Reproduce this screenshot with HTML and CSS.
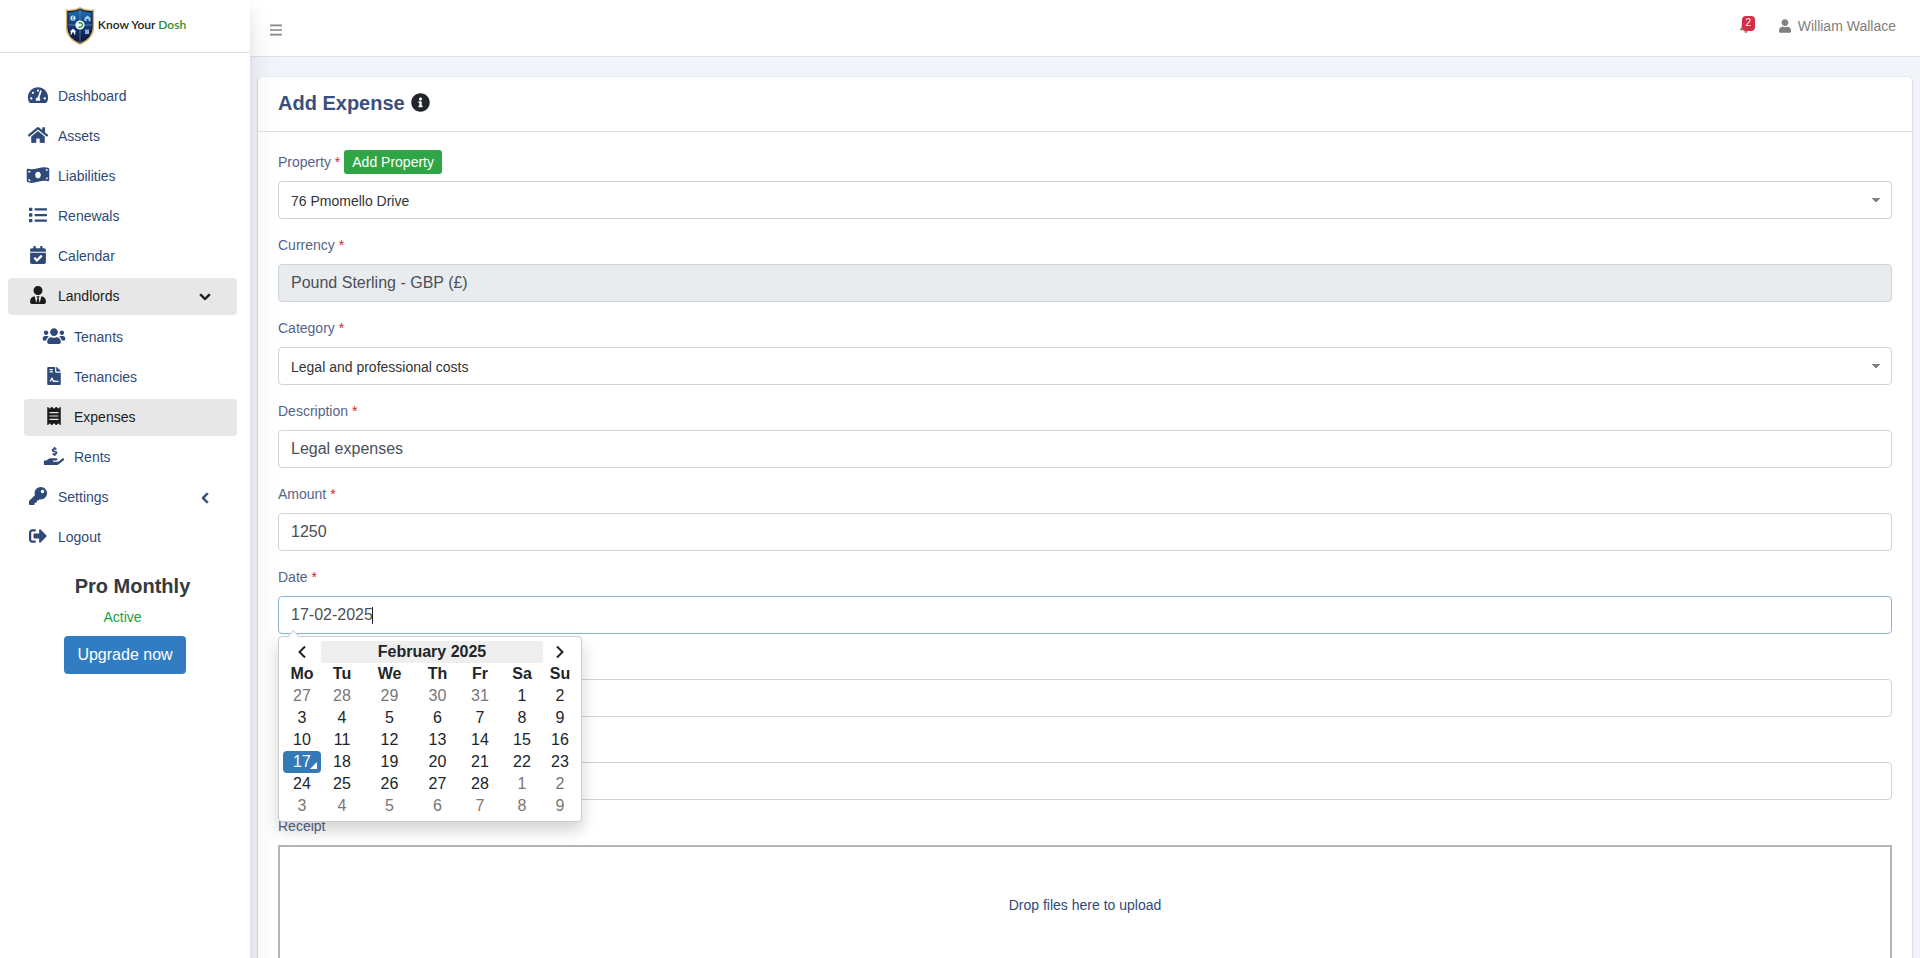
FILE: index.html
```html
<!DOCTYPE html>
<html lang="en">
<head>
  <meta charset="utf-8">
  <meta name="viewport" content="width=device-width, initial-scale=1">
  <title>Add Expense | Know Your Dosh</title>
  <link rel="stylesheet" href="styles.css">
</head>
<body>
  <div class="wrapper">
    <!-- Sidebar -->
    <aside class="sidebar">
      <a href="#" class="brand">
        <svg class="brand-logo" viewBox="0 0 30 38">
          <defs>
            <linearGradient id="shield" x1="0" y1="0" x2="0" y2="1">
              <stop offset="0" stop-color="#1e6fae"/>
              <stop offset=".5" stop-color="#143a7c"/>
              <stop offset="1" stop-color="#0c1638"/>
            </linearGradient>
          </defs>
          <path d="M15 .8C11 3 6 3.600 1.600 3.200V20c0 8 6 14 13.400 17.200C22.400 34 28.400 28 28.400 20V3.200C24 3.600 19 3 15 .8z" fill="#111d3c" stroke="#d9b069" stroke-width="1.400"/>
          <path d="M15 3C11.500 4.800 7.500 5.500 3.500 5.300V20c0 6.500 5 11.800 11.500 14.800C21.500 31.800 26.500 26.500 26.500 20V5.300C22.500 5.500 18.500 4.800 15 3z" fill="url(#shield)"/>
          <path d="M15 1v36M3 18h24" stroke="#5d86b5" stroke-width=".8"/>
          <circle cx="8" cy="11" r="2.600" fill="#d9ecfa"/>
          <path d="M9 9.800H7.400v2.400H9" stroke="#2a6caa" fill="none" stroke-width=".8"/>
          <path d="M19.500 11l3-2.500 3 2.500v3h-2v-2h-2v2h-2z" fill="#9fc9ea"/>
          <path d="M4.800 24.500l3.200-2.800 3.200 2.800h-.9v3H9v-2H7v2H5.700v-3z" fill="#fff"/>
          <path d="M20 22.500h4v4.500h-4z" fill="#8fa8d4"/>
          <circle cx="15" cy="18" r="4.600" fill="#f2f8fb"/>
          <path d="M13.500 15.800c3-.4 4.500 1 4 2.400s-2 2.200-4 2" stroke="#2f9a3c" stroke-width="1.400" fill="none"/>
        </svg>
        <span class="brand-text">Know Your <span>Dosh</span></span>
      </a>

      <nav class="menu">
        <a href="#" class="menu-item">
          <svg class="icon" viewBox="0 0 576 512"><path d="M288 32C128.940 32 0 160.940 0 320c0 52.800 14.250 102.260 39.060 144.800 5.610 9.620 16.300 15.200 27.440 15.200h443c11.140 0 21.830-5.580 27.440-15.200C561.750 422.260 576 372.800 576 320c0-159.060-128.940-288-288-288zm0 64c14.710 0 26.580 10.130 30.320 23.650-1.110 2.260-2.640 4.230-3.450 6.670l-9.220 27.670c-5.130 3.490-10.970 6.010-17.640 6.010-17.670 0-32-14.330-32-32S270.330 96 288 96zM96 384c-17.670 0-32-14.330-32-32s14.330-32 32-32 32 14.330 32 32-14.330 32-32 32zm48-160c-17.670 0-32-14.330-32-32s14.330-32 32-32 32 14.330 32 32-14.330 32-32 32zm246.770-72.410l-61.330 184C343.130 347.330 352 364.540 352 384c0 11.720-3.380 22.550-8.880 32H232.880c-5.500-9.450-8.880-20.280-8.880-32 0-33.940 26.500-61.430 59.900-63.590l61.340-184.010c4.170-12.560 17.730-19.450 30.360-15.170 12.570 4.190 19.350 17.790 15.170 30.360zM480 384c-17.670 0-32-14.330-32-32s14.330-32 32-32 32 14.330 32 32-14.330 32-32 32z"/></svg>
          <span>Dashboard</span>
        </a>
        <a href="#" class="menu-item">
          <svg class="icon" viewBox="0 0 576 512"><path d="M280.370 148.260L96 300.110V464a16 16 0 0 0 16 16l112.060-.29a16 16 0 0 0 15.920-16V368a16 16 0 0 1 16-16h64a16 16 0 0 1 16 16v95.640a16 16 0 0 0 16 16.050L464 480a16 16 0 0 0 16-16V300L295.670 148.260a12.190 12.190 0 0 0-15.300 0zM571.600 251.470L488 182.560V44.050a12 12 0 0 0-12-12h-56a12 12 0 0 0-12 12v72.610L318.470 43a48 48 0 0 0-61 0L4.340 251.470a12 12 0 0 0-1.600 16.900l25.500 31A12 12 0 0 0 45.150 301l235.220-193.740a12.190 12.190 0 0 1 15.300 0L530.900 301a12 12 0 0 0 16.900-1.600l25.500-31a12 12 0 0 0-1.700-16.930z"/></svg>
          <span>Assets</span>
        </a>
        <a href="#" class="menu-item">
          <svg class="icon" viewBox="0 0 640 512"><path d="M621.160 54.460C582.370 38.190 543.550 32 504.750 32c-123.170-.01-246.330 62.340-369.500 62.340-30.890 0-61.760-3.920-92.650-13.720-3.470-1.100-6.950-1.620-10.350-1.620C15.040 79 0 92.320 0 110.810v317.260c0 12.630 7.230 24.600 18.840 29.460C57.630 473.810 96.450 480 135.250 480c123.170 0 246.340-62.350 369.510-62.350 30.890 0 61.760 3.920 92.650 13.720 3.470 1.100 6.950 1.620 10.350 1.620 17.210 0 32.250-13.320 32.250-31.810V83.930c-.01-12.640-7.240-24.600-18.850-29.470zM48 132.220c20.120 5.040 41.120 7.570 62.720 8.930C104.840 170.540 79 192.690 48 192.690v-60.470zm0 285v-47.780c34.370 0 62.180 27.270 63.710 61.400-22.530-1.810-43.590-6.310-63.710-13.620zM320 352c-44.190 0-80-42.990-80-96 0-53.020 35.820-96 80-96s80 42.980 80 96c0 53.030-35.830 96-80 96zm272 27.780c-17.520-4.390-35.710-6.850-54.320-8.440 5.870-26.080 27.500-45.880 54.320-49.280v57.720zm0-236.110c-30.890-3.910-54.860-29.700-55.810-61.550 19.540 2.170 38.090 6.230 55.810 12.660v48.890z"/></svg>
          <span>Liabilities</span>
        </a>
        <a href="#" class="menu-item">
          <svg class="icon" viewBox="0 0 512 512"><path d="M80 368H16a16 16 0 0 0-16 16v64a16 16 0 0 0 16 16h64a16 16 0 0 0 16-16v-64a16 16 0 0 0-16-16zm0-320H16A16 16 0 0 0 0 64v64a16 16 0 0 0 16 16h64a16 16 0 0 0 16-16V64a16 16 0 0 0-16-16zm0 160H16a16 16 0 0 0-16 16v64a16 16 0 0 0 16 16h64a16 16 0 0 0 16-16v-64a16 16 0 0 0-16-16zm416 176H176a16 16 0 0 0-16 16v32a16 16 0 0 0 16 16h320a16 16 0 0 0 16-16v-32a16 16 0 0 0-16-16zm0-320H176a16 16 0 0 0-16 16v32a16 16 0 0 0 16 16h320a16 16 0 0 0 16-16V80a16 16 0 0 0-16-16zm0 160H176a16 16 0 0 0-16 16v32a16 16 0 0 0 16 16h320a16 16 0 0 0 16-16v-32a16 16 0 0 0-16-16z"/></svg>
          <span>Renewals</span>
        </a>
        <a href="#" class="menu-item">
          <svg class="icon" viewBox="0 0 448 512"><path d="M436 160H12c-6.627 0-12-5.373-12-12v-36c0-26.510 21.490-48 48-48h48V12c0-6.627 5.373-12 12-12h40c6.627 0 12 5.373 12 12v52h128V12c0-6.627 5.373-12 12-12h40c6.627 0 12 5.373 12 12v52h48c26.510 0 48 21.490 48 48v36c0 6.627-5.373 12-12 12zM12 192h424c6.627 0 12 5.373 12 12v260c0 26.510-21.490 48-48 48H48c-26.510 0-48-21.490-48-48V204c0-6.627 5.373-12 12-12zm333.296 95.947l-28.169-28.398c-4.667-4.705-12.265-4.736-16.970-.068L194.120 364.665l-45.980-46.352c-4.667-4.705-12.266-4.736-16.971-.068l-28.397 28.170c-4.705 4.667-4.736 12.265-.068 16.970l82.601 83.269c4.667 4.705 12.265 4.736 16.970.068l142.953-141.805c4.705-4.667 4.736-12.265.068-16.970z"/></svg>
          <span>Calendar</span>
        </a>
        <a href="#" class="menu-item active">
          <svg class="icon" viewBox="0 0 448 512"><path d="M224 256c70.700 0 128-57.300 128-128S294.700 0 224 0 96 57.300 96 128s57.300 128 128 128zm95.800 32.600L272 480l-32-136 32-56h-96l32 56-32 136-47.800-191.400C56.900 292 0 350.300 0 422.400V464c0 26.500 21.500 48 48 48h352c26.500 0 48-21.500 48-48v-41.600c0-72.100-56.900-130.400-128.200-133.800z"/></svg>
          <span>Landlords</span>
          <svg class="arrow" viewBox="0 0 448 512"><path d="M207 381.500L12.700 187.100c-9.400-9.400-9.400-24.600 0-33.900l22.700-22.700c9.400-9.400 24.500-9.400 33.900 0L224 284.500l154.700-154c9.400-9.300 24.500-9.300 33.900 0l22.700 22.700c9.400 9.400 9.400 24.600 0 33.900L241 381.500c-9.400 9.400-24.600 9.400-34 0z"/></svg>
        </a>
        <div class="submenu">
          <a href="#" class="menu-item">
            <svg class="icon" viewBox="0 0 640 512"><path d="M96 224c35.300 0 64-28.700 64-64s-28.700-64-64-64-64 28.700-64 64 28.700 64 64 64zm448 0c35.300 0 64-28.700 64-64s-28.700-64-64-64-64 28.700-64 64 28.700 64 64 64zm32 32h-64c-17.600 0-33.500 7.100-45.100 18.600 40.300 22.100 68.900 62 75.100 109.400h66c17.700 0 32-14.300 32-32v-32c0-35.300-28.700-64-64-64zm-256 0c61.900 0 112-50.100 112-112S381.900 32 320 32 208 82.100 208 144s50.100 112 112 112zm76.800 32h-8.300c-20.800 10-43.900 16-68.500 16s-47.600-6-68.500-16h-8.300C179.600 288 128 339.600 128 403.200V432c0 26.500 21.500 48 48 48h288c26.500 0 48-21.500 48-48v-28.800c0-63.600-51.600-115.200-115.200-115.200zm-223.700-13.400C161.500 263.100 145.600 256 128 256H64c-35.300 0-64 28.700-64 64v32c0 17.700 14.300 32 32 32h65.900c6.300-47.400 34.900-87.300 75.200-109.400z"/></svg>
            <span>Tenants</span>
          </a>
          <a href="#" class="menu-item">
            <svg class="icon" viewBox="0 0 384 512"><path fill-rule="evenodd" d="M224 136V0H24C10.700 0 0 10.700 0 24v464c0 13.300 10.700 24 24 24h336c13.300 0 24-10.700 24-24V160H248c-13.200 0-24-10.800-24-24zM377 105L279.100 7c-4.500-4.500-10.600-7-17-7H256v128h128v-6.100c0-6.300-2.500-12.400-7-16.900zM64 60h96v32H64zM64 124h96v32H64zM64 414l50-100c8-16 30-16 38 0l34 70c12-14 36-16 50 8h84v36h-92c-14 0-18-6-24-18-8 20-34 20-44 0l-28-54-24 58z"/></svg>
            <span>Tenancies</span>
          </a>
          <a href="#" class="menu-item active">
            <svg class="icon" viewBox="0 0 384 512"><path d="M358.400 3.200L320 48 265.600 3.200a15.900 15.900 0 0 0-19.200 0L192 48 137.600 3.200a15.900 15.900 0 0 0-19.200 0L64 48 25.600 3.200C15-4.700 0 2.800 0 16v480c0 13.200 15 20.700 25.600 12.800L64 464l54.400 44.800a15.900 15.900 0 0 0 19.200 0L192 464l54.400 44.800a15.900 15.900 0 0 0 19.200 0L320 464l38.400 44.800c10.500 7.900 25.600.4 25.600-12.800V16c0-13.200-15-20.700-25.600-12.800zM320 360c0 4.400-3.600 8-8 8H72c-4.400 0-8-3.600-8-8v-16c0-4.400 3.600-8 8-8h240c4.400 0 8 3.600 8 8v16zm0-96c0 4.400-3.600 8-8 8H72c-4.400 0-8-3.600-8-8v-16c0-4.400 3.600-8 8-8h240c4.400 0 8 3.600 8 8v16zm0-96c0 4.400-3.600 8-8 8H72c-4.400 0-8-3.600-8-8v-16c0-4.400 3.600-8 8-8h240c4.400 0 8 3.600 8 8v16z"/></svg>
            <span>Expenses</span>
          </a>
          <a href="#" class="menu-item">
            <svg class="icon" viewBox="0 0 576 512"><path d="M271.060 144.300l54.270 14.300a8.590 8.590 0 0 1 6.630 8.100c0 4.600-4.090 8.400-9.120 8.400h-35.600a30 30 0 0 1-11.190-2.200c-5.240-2.200-11.280-1.700-15.300 2l-19 17.500a11.680 11.680 0 0 0-2.250 2.660 11.420 11.420 0 0 0 3.880 15.740 83.770 83.770 0 0 0 34.510 11.500V240c0 8.800 7.830 16 17.370 16h17.370c9.550 0 17.380-7.200 17.380-16v-17.600c32.930-3.600 57.840-31 53.500-63-3.150-23-22.460-41.300-46.560-47.700L282.680 97.400a8.590 8.590 0 0 1-6.630-8.100c0-4.600 4.090-8.400 9.120-8.400h35.600A30 30 0 0 1 332 83.100c5.230 2.200 11.280 1.700 15.300-2l19-17.500A11.310 11.310 0 0 0 368.470 61a11.430 11.430 0 0 0-3.840-15.780 83.820 83.820 0 0 0-34.520-11.500V16c0-8.800-7.820-16-17.370-16h-17.370C285.820 0 278 7.200 278 16v17.600c-32.890 3.600-57.850 31-53.510 63 3.150 23 22.470 41.300 46.570 47.700zM565.270 328.100c-11.800-10.700-30.200-10-42.600 0L430.270 402a63.640 63.640 0 0 1-40 14H272a16 16 0 0 1 0-32h78.290c15.900 0 30.710-10.900 33.250-26.600a31.200 31.200 0 0 0 .46-5.460A32 32 0 0 0 352 320H192a117.660 117.660 0 0 0-74.100 26.290L71.400 384H16a16 16 0 0 0-16 16v96a16 16 0 0 0 16 16h356.800a64 64 0 0 0 40-14L564 377a32 32 0 0 0 1.280-48.900z"/></svg>
            <span>Rents</span>
          </a>
        </div>
        <a href="#" class="menu-item">
          <svg class="icon" viewBox="0 0 512 512"><path d="M512 176.001C512 273.203 433.202 352 336 352c-11.220 0-22.190-1.062-32.827-3.069l-24.012 27.014A23.999 23.999 0 0 1 261.223 384H224v40c0 13.255-10.745 24-24 24h-40v40c0 13.255-10.745 24-24 24H24c-13.255 0-24-10.745-24-24v-78.059c0-6.365 2.529-12.470 7.029-16.971l161.802-161.802C163.108 213.814 160 195.271 160 176 160 78.798 238.797.001 335.999 0 433.488-.001 512 78.511 512 176.001zM336 128c0 26.510 21.490 48 48 48s48-21.490 48-48-21.490-48-48-48-48 21.490-48 48z"/></svg>
          <span>Settings</span>
          <svg class="arrow" viewBox="0 0 320 512"><path d="M34.520 239.030L228.870 44.690c9.370-9.370 24.570-9.370 33.940 0l22.670 22.670c9.360 9.360 9.370 24.520.04 33.900L131.490 256l154.020 154.750c9.340 9.380 9.320 24.540-.04 33.900l-22.670 22.670c-9.370 9.370-24.570 9.370-33.940 0L34.520 272.970c-9.370-9.370-9.370-24.570 0-33.940z"/></svg>
        </a>
        <a href="#" class="menu-item">
          <svg class="icon" viewBox="0 0 512 512"><path d="M497 273L329 441c-15 15-41 4.500-41-17v-96H152c-13.300 0-24-10.700-24-24v-96c0-13.300 10.700-24 24-24h136V88c0-21.400 25.900-32 41-17l168 168c9.300 9.400 9.300 24.600 0 34zM192 436v-40c0-6.600-5.400-12-12-12H96c-17.700 0-32-14.300-32-32V160c0-17.700 14.300-32 32-32h84c6.600 0 12-5.400 12-12V76c0-6.600-5.400-12-12-12H96c-53 0-96 43-96 96v192c0 53 43 96 96 96h84c6.600 0 12-5.400 12-12z"/></svg>
          <span>Logout</span>
        </a>
      </nav>

      <div class="plan">
        <h2>Pro Monthly</h2>
        <p>Active</p>
        <button type="button" class="btn-upgrade">Upgrade now</button>
      </div>
    </aside>

    <div class="main">
      <!-- Navbar -->
      <header class="navbar">
        <button type="button" class="toggle" aria-label="Toggle menu">
          <svg viewBox="0 0 14 14"><path d="M0 1.500h14M0 7h14M0 12.500h14" stroke="currentColor" stroke-width="2"/></svg>
        </button>
        <a href="#" class="bell" aria-label="Notifications">
          <svg viewBox="0 0 448 512"><path d="M224 512c35.320 0 63.970-28.650 63.970-64H160.030c0 35.350 28.650 64 63.970 64zm215.390-149.710c-19.320-20.760-55.470-51.990-55.470-154.290 0-77.700-54.480-139.900-127.940-155.160V32c0-17.670-14.320-32-31.980-32s-31.980 14.330-31.980 32v20.840C118.560 68.100 64.080 130.300 64.080 208c0 102.300-36.150 133.530-55.470 154.290-6 6.450-8.660 14.160-8.610 21.710.11 16.400 12.980 32 32.100 32h383.800c19.120 0 32-15.600 32.100-32 .05-7.550-2.610-15.270-8.610-21.710zM67.530 368c21.220-27.970 44.420-74.330 44.530-159.420 0-.2-.06-.38-.06-.58 0-61.860 50.140-112 112-112s112 50.140 112 112c0 .2-.06.38-.06.58.11 85.100 23.310 131.460 44.530 159.420H67.530z"/></svg>
          <span class="badge">2</span>
        </a>
        <a href="#" class="user">
          <svg viewBox="0 0 448 512"><path d="M224 256c70.700 0 128-57.300 128-128S294.700 0 224 0 96 57.300 96 128s57.300 128 128 128zm89.600 32h-16.700c-22.200 10.200-46.900 16-72.900 16s-50.600-5.800-72.900-16h-16.700C60.200 288 0 348.200 0 422.400V464c0 26.500 21.500 48 48 48h352c26.500 0 48-21.500 48-48v-41.600c0-74.200-60.200-134.400-134.400-134.400z"/></svg>
          William Wallace
        </a>
      </header>

      <!-- Expense form -->
      <main class="card">
        <div class="card-header">
          <h1>Add Expense</h1>
          <svg viewBox="0 0 512 512"><path d="M256 8C119.043 8 8 119.083 8 256c0 136.997 111.043 248 248 248s248-111.003 248-248C504 119.083 392.957 8 256 8zm0 110c23.196 0 42 18.804 42 42s-18.804 42-42 42-42-18.804-42-42 18.804-42 42-42zm56 254c0 6.627-5.373 12-12 12h-88c-6.627 0-12-5.373-12-12v-24c0-6.627 5.373-12 12-12h12v-64h-12c-6.627 0-12-5.373-12-12v-24c0-6.627 5.373-12 12-12h64c6.627 0 12 5.373 12 12v100h12c6.627 0 12 5.373 12 12v24z"/></svg>
        </div>
        <form class="card-body">
          <div class="form-group">
            <div class="label-row">
              <label for="property">Property <span class="req">*</span></label>
              <button type="button" class="btn-add">Add Property</button>
            </div>
            <select id="property" class="form-control">
              <option>76 Pmomello Drive</option>
            </select>
          </div>
          <div class="form-group">
            <div class="label-row"><label for="currency">Currency <span class="req">*</span></label></div>
            <input type="text" id="currency" class="form-control" value="Pound Sterling - GBP (£)" readonly>
          </div>
          <div class="form-group">
            <div class="label-row"><label for="category">Category <span class="req">*</span></label></div>
            <select id="category" class="form-control">
              <option>Legal and professional costs</option>
            </select>
          </div>
          <div class="form-group">
            <div class="label-row"><label for="description">Description <span class="req">*</span></label></div>
            <input type="text" id="description" class="form-control" value="Legal expenses">
          </div>
          <div class="form-group">
            <div class="label-row"><label for="amount">Amount <span class="req">*</span></label></div>
            <input type="text" id="amount" class="form-control" value="1250">
          </div>
          <div class="form-group">
            <div class="label-row"><label for="date">Date <span class="req">*</span></label></div>
            <div class="date-field">
              <input type="text" id="date" class="form-control focused" value="17-02-2025">
              <span class="caret"></span>
              <div class="datepicker">
                <table>
                  <colgroup>
                    <col class="c-mo"><col class="c-tu"><col class="c-we"><col class="c-th"><col class="c-fr"><col class="c-sa"><col class="c-su">
                  </colgroup>
                  <thead>
                    <tr>
                      <th><button type="button" aria-label="Previous month"><svg viewBox="0 0 10 14"><path d="M8 1.500L2.500 7 8 12.500" /></svg></button></th>
                      <th colspan="5" class="switch">February 2025</th>
                      <th><button type="button" aria-label="Next month"><svg viewBox="0 0 10 14"><path d="M2 1.500L7.500 7 2 12.500" /></svg></button></th>
                    </tr>
                    <tr><th>Mo</th><th>Tu</th><th>We</th><th>Th</th><th>Fr</th><th>Sa</th><th>Su</th></tr>
                  </thead>
                  <tbody>
                    <tr><td class="old">27</td><td class="old">28</td><td class="old">29</td><td class="old">30</td><td class="old">31</td><td>1</td><td>2</td></tr>
                    <tr><td>3</td><td>4</td><td>5</td><td>6</td><td>7</td><td>8</td><td>9</td></tr>
                    <tr><td>10</td><td>11</td><td>12</td><td>13</td><td>14</td><td>15</td><td>16</td></tr>
                    <tr><td class="selected">17</td><td>18</td><td>19</td><td>20</td><td>21</td><td>22</td><td>23</td></tr>
                    <tr><td>24</td><td>25</td><td>26</td><td>27</td><td>28</td><td class="old">1</td><td class="old">2</td></tr>
                    <tr><td class="old">3</td><td class="old">4</td><td class="old">5</td><td class="old">6</td><td class="old">7</td><td class="old">8</td><td class="old">9</td></tr>
                  </tbody>
                </table>
              </div>
            </div>
          </div>
          <div class="form-group">
            <div class="label-row"></div>
            <input type="text" class="form-control" aria-label="Supplier">
          </div>
          <div class="form-group">
            <div class="label-row"></div>
            <input type="text" class="form-control" aria-label="Notes">
          </div>
          <div class="form-group">
            <div class="label-row"><label for="receipt">Receipt</label></div>
            <button type="button" id="receipt" class="dropzone">Drop files here to upload</button>
          </div>
        </form>
      </main>
    </div>
  </div>
</body>
</html>
```
FILE: styles.css
```css
* { box-sizing: border-box; }
body { margin: 0; font-family: "Liberation Sans", Arial, sans-serif; font-size: 14px; line-height: 21px; color: #212529; background-color: #f1f4f9; }
a { text-decoration: none; color: inherit; }
button, input, select { font-family: inherit; }
svg { fill: currentColor; flex-shrink: 0; }

.wrapper { display: flex; min-height: 100vh; }

/* Sidebar */
.sidebar { position: relative; z-index: 1; width: 250px; flex-shrink: 0; background-color: #fff; box-shadow: 0 14px 28px rgba(0,0,0,.1), 0 10px 10px rgba(0,0,0,.06); }
.brand { display: flex; align-items: center; justify-content: center; height: 53px; padding: 0 0 1px 1px; border-bottom: 1px solid #dee2e6; }
.brand-logo { width: 30px; height: 38px; }
.brand-text { padding: 0 0 3px 3px; font-family: Lato, sans-serif; font-weight: 600; font-size: 12px; color: #222; }
.brand-text span { color: #2a8c2e; }
.menu { display: flex; flex-direction: column; gap: 3px; padding: 25px 13px 0 8px; }
.submenu { display: flex; flex-direction: column; gap: 3px; margin-top: 1px; padding-left: 16px; }
.menu-item { display: flex; align-items: center; height: 37px; padding: 0 25px 0 17px; border-radius: 4px; color: #2f4a78; }
.menu-item.active { background-color: #e7e7e7; color: #1b1b1b; }
.icon { width: 26px; height: 18px; margin: 0 7px 4px 0; }
.menu-item > span { margin-bottom: 1px; }
.arrow { width: 14px; height: 12px; margin-left: auto; stroke: currentColor; stroke-width: 30; }
.plan { display: flex; flex-direction: column; align-items: center; padding-top: 18px; }
.plan h2 { margin: 0; padding-left: 15px; font-size: 20px; line-height: 24px; color: #343a40; }
.plan p { margin: 9px 5px 8px 0; color: #17a045; }
.btn-upgrade { height: 38px; padding: 0 13px; border: 0; border-radius: 4px; background-color: #327dc2; color: #fff; font-size: 16px; }

/* Navbar */
.main { flex: 1; min-width: 0; }
.navbar { display: flex; align-items: center; height: 57px; padding: 0 24px 4px 20px; border-bottom: 1px solid #dee2e6; background-color: #fff; color: #808080; }
.toggle { margin-top: 7px; margin-right: auto; padding: 0; border: 0; background: none; color: #868686; }
.toggle svg { display: block; width: 12px; height: 12px; }
.bell { position: relative; margin-right: 27px; }
.bell svg { display: block; width: 12px; height: 14px; }
.badge { position: absolute; top: -3px; left: 2px; width: 13px; height: 15px; border-radius: 4px; background-color: #d22e46; color: #fff; font-size: 10px; line-height: 14px; text-align: center; }
.user { display: flex; align-items: center; gap: 7px; }
.user svg { width: 12px; height: 14px; }

/* Card */
.card { margin: 20px 8px; border-radius: 4px; background-color: #fff; box-shadow: 0 0 1px rgba(0,0,0,.13), 0 1px 3px rgba(0,0,0,.2); }
.card-header { display: flex; align-items: center; gap: 6px; height: 55px; padding: 0 20px 3px; border-bottom: 1px solid #dfe1e4; }
.card-header h1 { margin: 0; font-size: 20px; line-height: 24px; color: #3a4f7a; }
.card-header svg { width: 19px; height: 19px; }
.card-body { padding: 20px; }
.form-group { margin-bottom: 16px; }
.label-row { display: flex; align-items: center; gap: 4px; height: 21px; margin-bottom: 8px; color: #55648a; }
.req { color: #e02030; }
.btn-add { height: 24px; margin-bottom: 2px; padding: 0 8px; border: 0; border-radius: 3px; background-color: #2fa545; color: #fff; font-size: 14px; }
.form-control { display: block; width: 100%; height: 38px; padding: 0 12px; border: 1px solid #ced4da; border-radius: 4px; background-color: #fff; color: #495057; font-size: 16px; outline: none; }
.form-control[readonly] { background-color: #e9ecef; }
.form-control.focused { border-color: #8ab4da; }
select.form-control { appearance: none; padding-top: 2px; color: #333; font-size: 14px; background-image: linear-gradient(to bottom left, #808080 50%, transparent 50%), linear-gradient(to bottom right, #808080 50%, transparent 50%); background-position: right 15px top 16px, right 11px top 16px; background-size: 4px 5px; background-repeat: no-repeat; }
.dropzone { display: block; width: 100%; min-height: 150px; padding: 0 0 30px; border: 2px solid #b5b5b5; background-color: #fff; color: #2f4a78; font-size: 14px; }

/* Datepicker */
.date-field { position: relative; }
.caret { position: absolute; top: 11px; left: 94px; width: 1px; height: 17px; background-color: #222; }
.datepicker { position: absolute; z-index: 2; top: 40px; left: 0; width: 304px; padding: 4px; border: 1px solid #ccc; border-radius: 4px; background-color: #fff; box-shadow: 0 8px 16px rgba(0,0,0,.18); font-size: 16px; line-height: 22px; }
.datepicker::before { content: ""; position: absolute; top: -5px; left: 10px; width: 8px; height: 8px; border: 1px solid #ccc; border-width: 1px 0 0 1px; background-color: #fff; transform: rotate(45deg); }
.datepicker table { width: 100%; table-layout: fixed; border-collapse: collapse; text-align: center; }
.datepicker th, .datepicker td { height: 22px; padding: 0; border-radius: 4px; }
.datepicker .switch { background-color: #eee; }
.datepicker .old { color: #777; }
.datepicker .selected { position: relative; background-color: #337ab7; color: #fff; }
.datepicker .selected::after { content: ""; position: absolute; right: 4px; bottom: 4px; border: solid transparent; border-width: 0 0 7px 7px; border-bottom-color: #fff; }
.datepicker button { display: block; width: 100%; height: 22px; padding: 0; border: 0; background: none; color: #212529; }
.datepicker svg { display: block; width: 10px; height: 14px; margin: 0 auto; fill: none; stroke: currentColor; stroke-width: 2; }
.c-mo { width: 38px; }
.c-tu { width: 42px; }
.c-we { width: 53px; }
.c-th { width: 43px; }
.c-fr, .c-sa { width: 42px; }
.c-su { width: 34px; }
```
